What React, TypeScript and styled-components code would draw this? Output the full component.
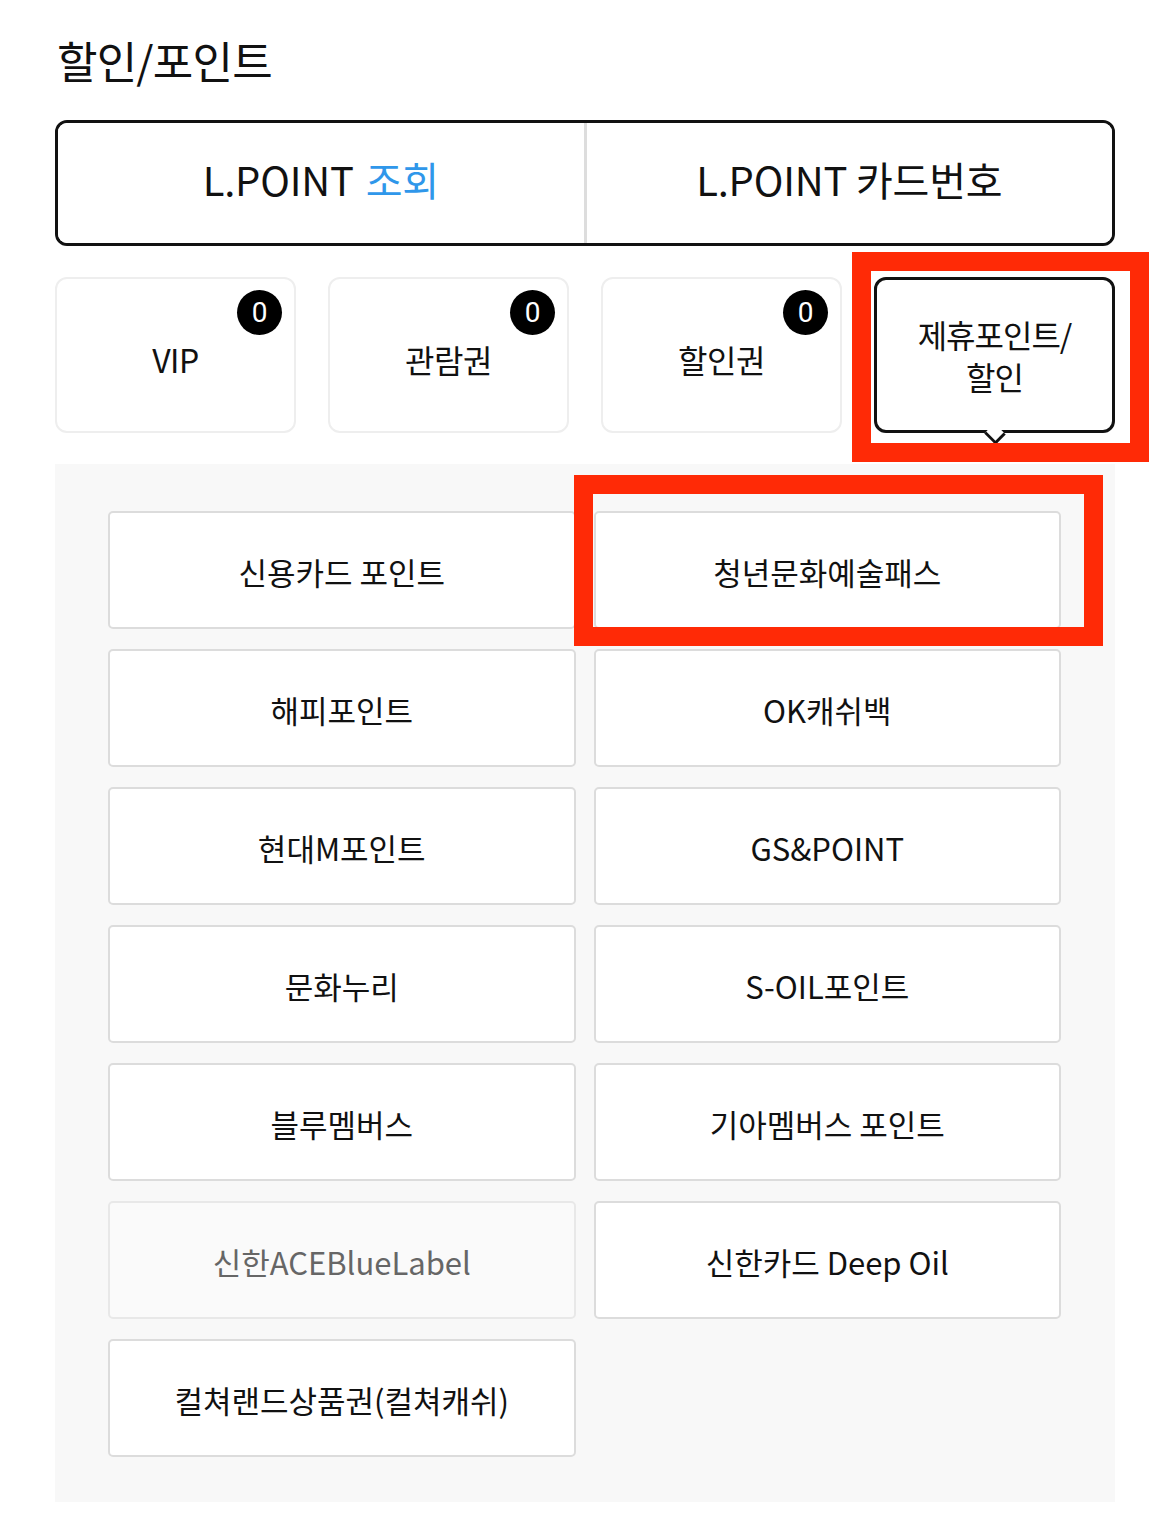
import React from "react";
import styled, { createGlobalStyle } from "styled-components";

const Global = createGlobalStyle`
  html, body { margin: 0; padding: 0; background: #ffffff; }
  body {
    font-family: "Noto Sans CJK KR", "Noto Sans", sans-serif;
    color: #111;
  }
  * { box-sizing: border-box; }
`;

const Page = styled.div`
  width: 1170px;
  padding: 28px 55px 0 55px;
`;

const Title = styled.h2`
  margin: 0 0 28px 2px;
  font-size: 44px;
  line-height: 64px;
  font-weight: 400;
  letter-spacing: -0.8px;
  color: #111;
`;

const Toggle = styled.div`
  display: flex;
  height: 126px;
  border: 3px solid #111;
  border-radius: 12px;
  overflow: hidden;
`;

const ToggleBtn = styled.button<{ $divider?: boolean }>`
  flex: 1;
  display: flex;
  align-items: center;
  justify-content: center;
  background: #fff;
  border: 0;
  border-left: ${(p) => (p.$divider ? "3px solid #dddddd" : "0")};
  font-family: "Noto Sans CJK KR", "Noto Sans", sans-serif;
  font-size: 40px;
  font-weight: 400;
  letter-spacing: -0.2px;
  color: #111;
  padding: 0 0 8px 0;
`;

const Blue = styled.span`
  color: #2f97ea;
  margin-left: 12px;
`;

const Tabs = styled.div`
  display: grid;
  grid-template-columns: repeat(4, 241px);
  column-gap: 32px;
  margin-top: 31px;
  height: 156px;
`;

const Tab = styled.div<{ $active?: boolean }>`
  position: relative;
  display: flex;
  align-items: center;
  justify-content: center;
  text-align: center;
  background: #fff;
  border: ${(p) => (p.$active ? "3px solid #111" : "2px solid #eeeeee")};
  border-radius: 12px;
  font-size: 32px;
  line-height: 42px;
  letter-spacing: ${(p) => (p.$active ? "-1px" : "-0.5px")};
  color: #111;
  padding-top: ${(p) => (p.$active ? "0" : "8px")};
`;

const Tail = styled.span`
  position: absolute;
  left: 50%;
  bottom: -12px;
  width: 16px;
  height: 16px;
  margin-left: -8px;
  background: #fff;
  border-right: 3px solid #111;
  border-bottom: 3px solid #111;
  transform: rotate(45deg) scaleY(0.9);
`;

const Badge = styled.span`
  position: absolute;
  top: 11px;
  right: 12px;
  width: 45px;
  height: 45px;
  border-radius: 50%;
  background: #000;
  color: #fff;
  font-size: 28px;
  line-height: 45px;
  text-align: center;
  letter-spacing: 0;
  font-family: "Roboto", "Noto Sans", sans-serif;
`;

const Panel = styled.div`
  margin-top: 31px;
  background: #f8f8f8;
  padding: 47px 54px 45px 53px;
`;

const Grid = styled.div`
  display: grid;
  grid-template-columns: 1fr 1fr;
  column-gap: 18px;
  row-gap: 20px;
`;

const Item = styled.div<{ $disabled?: boolean }>`
  position: relative;
  height: 118px;
  display: flex;
  align-items: center;
  justify-content: center;
  background: ${(p) => (p.$disabled ? "#fafafa" : "#ffffff")};
  border: 2px solid ${(p) => (p.$disabled ? "#e8e8e8" : "#dcdcdc")};
  border-radius: 5px;
  font-size: 31px;
  letter-spacing: 0;
  color: ${(p) => (p.$disabled ? "#666666" : "#111111")};
  padding-top: 2px;
`;

const Highlight = styled.span<{ $t: number; $r: number; $b: number; $l: number }>`
  position: absolute;
  top: ${(p) => p.$t}px;
  right: ${(p) => p.$r}px;
  bottom: ${(p) => p.$b}px;
  left: ${(p) => p.$l}px;
  border: 19px solid #ff2a06;
  pointer-events: none;
  z-index: 5;
`;

const tabs = [
  { label: "VIP", badge: "0" },
  { label: "관람권", badge: "0" },
  { label: "할인권", badge: "0" },
];

const items: { label: string; disabled?: boolean; mark?: boolean }[] = [
  { label: "신용카드 포인트" },
  { label: "청년문화예술패스", mark: true },
  { label: "해피포인트" },
  { label: "OK캐쉬백" },
  { label: "현대M포인트" },
  { label: "GS&POINT" },
  { label: "문화누리" },
  { label: "S-OIL포인트" },
  { label: "블루멤버스" },
  { label: "기아멤버스 포인트" },
  { label: "신한ACEBlueLabel", disabled: true },
  { label: "신한카드 Deep Oil" },
  { label: "컬쳐랜드상품권(컬쳐캐쉬)" },
];

export default function App() {
  return (
    <>
      <Global />
      <Page>
        <Title>할인/포인트</Title>
        <Toggle>
          <ToggleBtn>
            L.POINT<Blue>조회</Blue>
          </ToggleBtn>
          <ToggleBtn $divider>L.POINT 카드번호</ToggleBtn>
        </Toggle>
        <Tabs>
          {tabs.map((t) => (
            <Tab key={t.label}>
              {t.label}
              <Badge>{t.badge}</Badge>
            </Tab>
          ))}
          <Tab $active>
            제휴포인트/
            <br />
            할인
            <Tail />
            <Highlight $t={-28} $r={-37} $b={-32} $l={-25} />
          </Tab>
        </Tabs>
        <Panel>
          <Grid>
            {items.map((it) => (
              <Item key={it.label} $disabled={it.disabled}>
                {it.label}
                {it.mark && <Highlight $t={-38} $r={-44} $b={-19} $l={-22} />}
              </Item>
            ))}
          </Grid>
        </Panel>
      </Page>
    </>
  );
}
